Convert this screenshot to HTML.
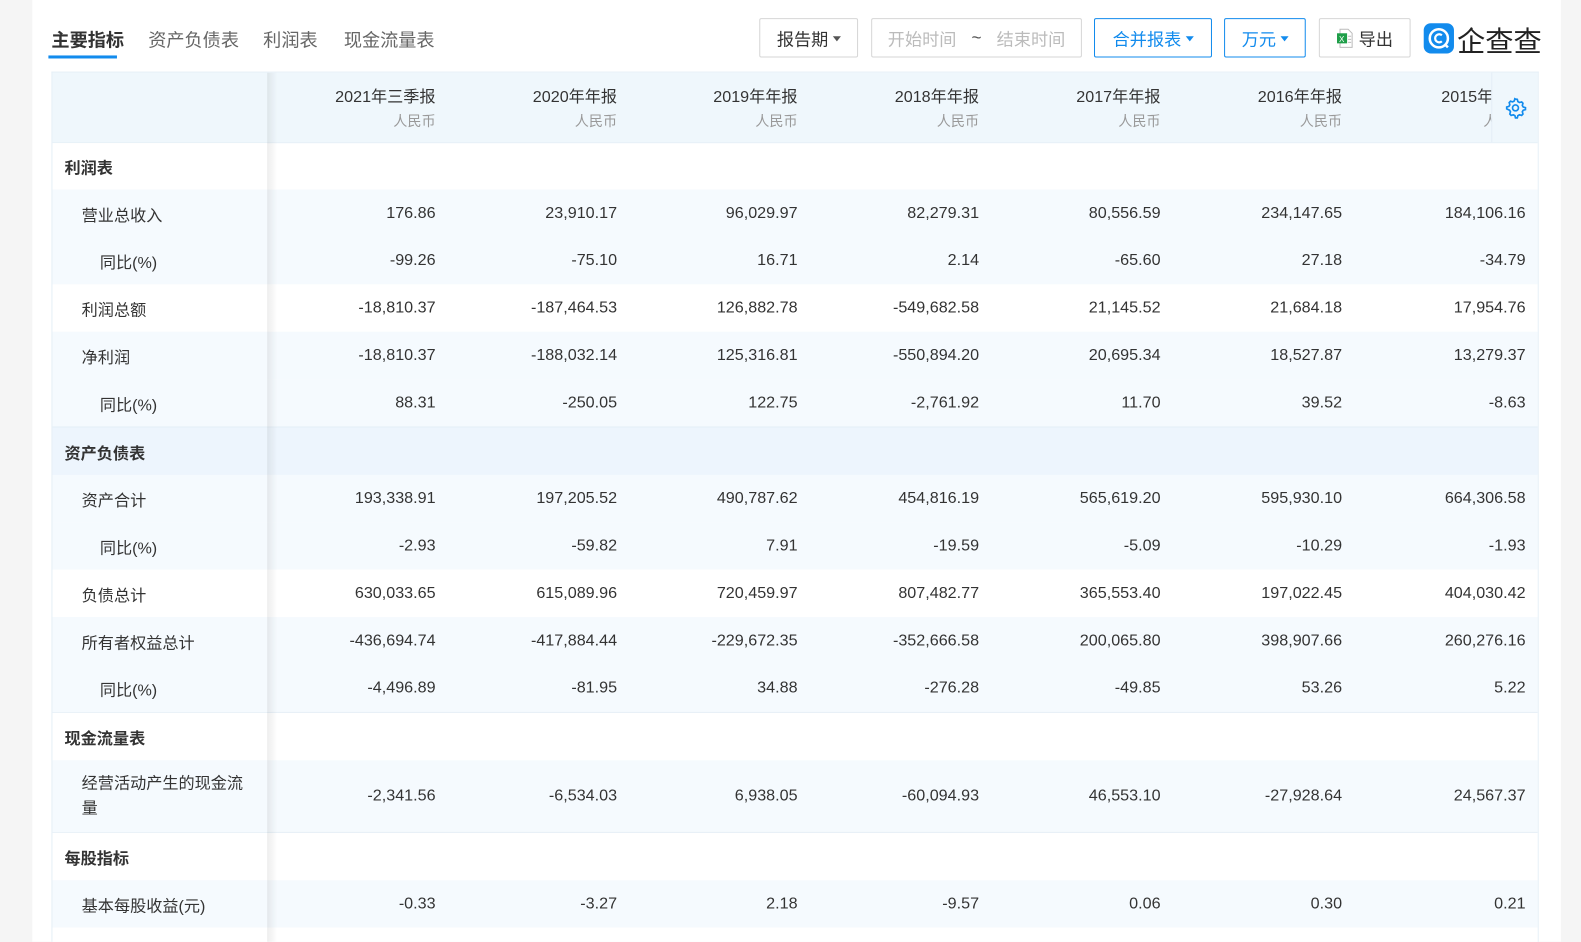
<!DOCTYPE html>
<html><head><meta charset="utf-8">
<style>
*{margin:0;padding:0;box-sizing:border-box}
body{width:1581px;height:934px;overflow:hidden;background:#f5f5f5;font-family:"Liberation Sans","Noto Sans CJK SC",sans-serif;color:#333;position:relative}
#w{position:absolute;left:0;top:0;width:1568px;height:926px;transform:scale(1.0083);transform-origin:0 0}
.page{position:absolute;left:32px;top:0;width:1516px;height:934px;background:#fff}
.tab{position:absolute;top:26px;font-size:18px;color:#666}
.btn{position:absolute;top:18px;height:39px;border:1px solid #d6d6d6;border-radius:2px;font-size:17px;color:#333;display:flex;align-items:center;justify-content:center}
.blue{border-color:#128bed;color:#128bed}
.caret{display:inline-block;border-left:4px solid transparent;border-right:4px solid transparent;border-top:5px solid currentColor;margin-left:4px;margin-top:2px}
.tbl{position:absolute;left:51px;top:71px;width:1475px;height:863px;border:1px solid #e4eef6;border-bottom:none;overflow:hidden}
.row{position:absolute;left:0;width:1474px;display:flex;align-items:center;font-size:16px}
.lab{width:213px;height:100%;display:flex;align-items:center;position:relative;z-index:2}
.c{text-align:right;flex:none}
.lt{background:#f5fafe}
.wt{background:#fff}
.sec{font-weight:bold}
.shadow{position:absolute;left:213px;top:0;width:10px;height:100%;background:linear-gradient(to right,rgba(0,0,0,0.07),rgba(0,0,0,0));z-index:3}
.bl{border-top:1px solid #e4eef6}
.h{padding-top:10px}
</style></head><body>
<div id="w">
<div class="page"></div>
<div class="tab" style="left:51px;color:#333;font-weight:bold">主要指标</div>
<div style="position:absolute;left:48px;top:55px;width:68px;height:3px;background:#128bed"></div>
<div class="tab" style="left:147px">资产负债表</div>
<div class="tab" style="left:261px">利润表</div>
<div class="tab" style="left:341px">现金流量表</div>

<div class="btn" style="left:753px;width:98px">报告期<span class="caret" style="color:#555"></span></div>
<div class="btn" style="left:864px;width:209px;color:#bbb;justify-content:space-around;padding:0 8px">开始时间<span style="color:#555">~</span>结束时间</div>
<div class="btn blue" style="left:1085px;width:117px">合并报表<span class="caret"></span></div>
<div class="btn blue" style="left:1214px;width:81px">万元<span class="caret"></span></div>
<div class="btn" style="left:1308px;width:91px"><svg width="16" height="20" viewBox="0 0 16 20" style="margin-right:6px"><path d="M3 1h8l4 4v14H3z" fill="#fff" stroke="#bbb"/><rect x="0" y="5" width="10" height="10" fill="#1e9e48"/><text x="2" y="13.5" font-size="8" fill="#fff" font-family="Liberation Sans">X</text><path d="M11 8h3M11 11h3M11 14h3" stroke="#bbb"/></svg>导出</div>
<div style="position:absolute;left:1412px;top:23px;width:30px;height:30px;border-radius:7px;background:#128bed"><svg width="30" height="30" viewBox="0 0 30 30"><circle cx="15" cy="15" r="9" fill="none" stroke="#fff" stroke-width="2.5"/><path d="M18 12a4 4 0 1 0 0 6" fill="none" stroke="#fff" stroke-width="2.2"/><path d="M21 21l3 3" stroke="#fff" stroke-width="2.5"/></svg></div>
<div style="position:absolute;left:1445px;top:20px;font-size:28px;color:#222;letter-spacing:0">企查查</div>

<div class="tbl">
<div class="row" style="top:0;height:69px;background:#eff7fc;align-items:flex-start">
 <div class="lab" style="background:#eff7fc"></div>
 <div class="c h" style="width:167px">2021年三季报<br><span style="font-size:14px;color:#999;line-height:28px">人民币</span></div>
 <div class="c h" style="width:180px">2020年年报<br><span style="font-size:14px;color:#999;line-height:28px">人民币</span></div>
 <div class="c h" style="width:179px">2019年年报<br><span style="font-size:14px;color:#999;line-height:28px">人民币</span></div>
 <div class="c h" style="width:180px">2018年年报<br><span style="font-size:14px;color:#999;line-height:28px">人民币</span></div>
 <div class="c h" style="width:180px">2017年年报<br><span style="font-size:14px;color:#999;line-height:28px">人民币</span></div>
 <div class="c h" style="width:180px">2016年年报<br><span style="font-size:14px;color:#999;line-height:28px">人民币</span></div>
 <div class="c h" style="width:182px">2015年年报<br><span style="font-size:14px;color:#999;line-height:28px">人民币</span></div>
</div>
<div style="position:absolute;left:1427px;top:0;width:47px;height:69px;background:#eff7fc;border-left:1px solid #e4eef6;z-index:4;display:flex;align-items:center;justify-content:center"><svg width="22" height="22" viewBox="0 0 24 24" fill="none" stroke="#128bed" stroke-width="1.8"><circle cx="12" cy="12" r="3.2"/><path d="M12 2.5l2 .3.6 2.4 1.7 1 2.4-.7 1.4 1.5-.7 2.4 1 1.7 2.4.6v2.2l-2.4.6-1 1.7.7 2.4-1.4 1.5-2.4-.7-1.7 1-.6 2.4h-2l-.6-2.4-1.7-1-2.4.7-1.4-1.5.7-2.4-1-1.7L2.5 13v-2l2.4-.6 1-1.7-.7-2.4 1.4-1.5 2.4.7 1.7-1 .6-2.4z"/></svg></div>

<div class="row wt bl" style="top:69px;height:47px"><div class="lab wt sec" style="padding-left:12px">利润表</div></div>
<div class="row lt" style="top:116px;height:47px"><div class="lab lt" style="padding-left:29px">营业总收入</div><div class="c" style="width:167px">176.86</div><div class="c" style="width:180px">23,910.17</div><div class="c" style="width:179px">96,029.97</div><div class="c" style="width:180px">82,279.31</div><div class="c" style="width:180px">80,556.59</div><div class="c" style="width:180px">234,147.65</div><div class="c" style="width:182px">184,106.16</div></div>
<div class="row lt" style="top:163px;height:47px"><div class="lab lt" style="padding-left:47px">同比(%)</div><div class="c" style="width:167px">-99.26</div><div class="c" style="width:180px">-75.10</div><div class="c" style="width:179px">16.71</div><div class="c" style="width:180px">2.14</div><div class="c" style="width:180px">-65.60</div><div class="c" style="width:180px">27.18</div><div class="c" style="width:182px">-34.79</div></div>
<div class="row wt" style="top:210px;height:47px"><div class="lab wt" style="padding-left:29px">利润总额</div><div class="c" style="width:167px">-18,810.37</div><div class="c" style="width:180px">-187,464.53</div><div class="c" style="width:179px">126,882.78</div><div class="c" style="width:180px">-549,682.58</div><div class="c" style="width:180px">21,145.52</div><div class="c" style="width:180px">21,684.18</div><div class="c" style="width:182px">17,954.76</div></div>
<div class="row lt" style="top:257px;height:47px"><div class="lab lt" style="padding-left:29px">净利润</div><div class="c" style="width:167px">-18,810.37</div><div class="c" style="width:180px">-188,032.14</div><div class="c" style="width:179px">125,316.81</div><div class="c" style="width:180px">-550,894.20</div><div class="c" style="width:180px">20,695.34</div><div class="c" style="width:180px">18,527.87</div><div class="c" style="width:182px">13,279.37</div></div>
<div class="row lt" style="top:304px;height:47px"><div class="lab lt" style="padding-left:47px">同比(%)</div><div class="c" style="width:167px">88.31</div><div class="c" style="width:180px">-250.05</div><div class="c" style="width:179px">122.75</div><div class="c" style="width:180px">-2,761.92</div><div class="c" style="width:180px">11.70</div><div class="c" style="width:180px">39.52</div><div class="c" style="width:182px">-8.63</div></div>

<div class="row bl" style="top:351px;height:48px;background:#edf5fd"><div class="lab sec" style="padding-left:12px;background:#edf5fd">资产负债表</div></div>
<div class="row lt" style="top:399px;height:47px"><div class="lab lt" style="padding-left:29px">资产合计</div><div class="c" style="width:167px">193,338.91</div><div class="c" style="width:180px">197,205.52</div><div class="c" style="width:179px">490,787.62</div><div class="c" style="width:180px">454,816.19</div><div class="c" style="width:180px">565,619.20</div><div class="c" style="width:180px">595,930.10</div><div class="c" style="width:182px">664,306.58</div></div>
<div class="row lt" style="top:446px;height:47px"><div class="lab lt" style="padding-left:47px">同比(%)</div><div class="c" style="width:167px">-2.93</div><div class="c" style="width:180px">-59.82</div><div class="c" style="width:179px">7.91</div><div class="c" style="width:180px">-19.59</div><div class="c" style="width:180px">-5.09</div><div class="c" style="width:180px">-10.29</div><div class="c" style="width:182px">-1.93</div></div>
<div class="row wt" style="top:493px;height:47px"><div class="lab wt" style="padding-left:29px">负债总计</div><div class="c" style="width:167px">630,033.65</div><div class="c" style="width:180px">615,089.96</div><div class="c" style="width:179px">720,459.97</div><div class="c" style="width:180px">807,482.77</div><div class="c" style="width:180px">365,553.40</div><div class="c" style="width:180px">197,022.45</div><div class="c" style="width:182px">404,030.42</div></div>
<div class="row lt" style="top:540px;height:47px"><div class="lab lt" style="padding-left:29px">所有者权益总计</div><div class="c" style="width:167px">-436,694.74</div><div class="c" style="width:180px">-417,884.44</div><div class="c" style="width:179px">-229,672.35</div><div class="c" style="width:180px">-352,666.58</div><div class="c" style="width:180px">200,065.80</div><div class="c" style="width:180px">398,907.66</div><div class="c" style="width:182px">260,276.16</div></div>
<div class="row lt" style="top:587px;height:47px"><div class="lab lt" style="padding-left:47px">同比(%)</div><div class="c" style="width:167px">-4,496.89</div><div class="c" style="width:180px">-81.95</div><div class="c" style="width:179px">34.88</div><div class="c" style="width:180px">-276.28</div><div class="c" style="width:180px">-49.85</div><div class="c" style="width:180px">53.26</div><div class="c" style="width:182px">5.22</div></div>

<div class="row wt bl" style="top:634px;height:48px"><div class="lab wt sec" style="padding-left:12px">现金流量表</div></div>
<div class="row lt" style="top:682px;height:71px"><div class="lab lt" style="padding-left:29px;padding-right:18px;line-height:25px">经营活动产生的现金流量</div><div class="c" style="width:167px">-2,341.56</div><div class="c" style="width:180px">-6,534.03</div><div class="c" style="width:179px">6,938.05</div><div class="c" style="width:180px">-60,094.93</div><div class="c" style="width:180px">46,553.10</div><div class="c" style="width:180px">-27,928.64</div><div class="c" style="width:182px">24,567.37</div></div>

<div class="row wt bl" style="top:753px;height:48px"><div class="lab wt sec" style="padding-left:12px">每股指标</div></div>
<div class="row lt" style="top:801px;height:47px"><div class="lab lt" style="padding-left:29px">基本每股收益(元)</div><div class="c" style="width:167px">-0.33</div><div class="c" style="width:180px">-3.27</div><div class="c" style="width:179px">2.18</div><div class="c" style="width:180px">-9.57</div><div class="c" style="width:180px">0.06</div><div class="c" style="width:180px">0.30</div><div class="c" style="width:182px">0.21</div></div>
<div class="row wt" style="top:848px;height:20px"><div class="lab wt"></div></div>
<div class="shadow" style="top:0;height:863px"></div>
</div>
</div>
</body></html>
